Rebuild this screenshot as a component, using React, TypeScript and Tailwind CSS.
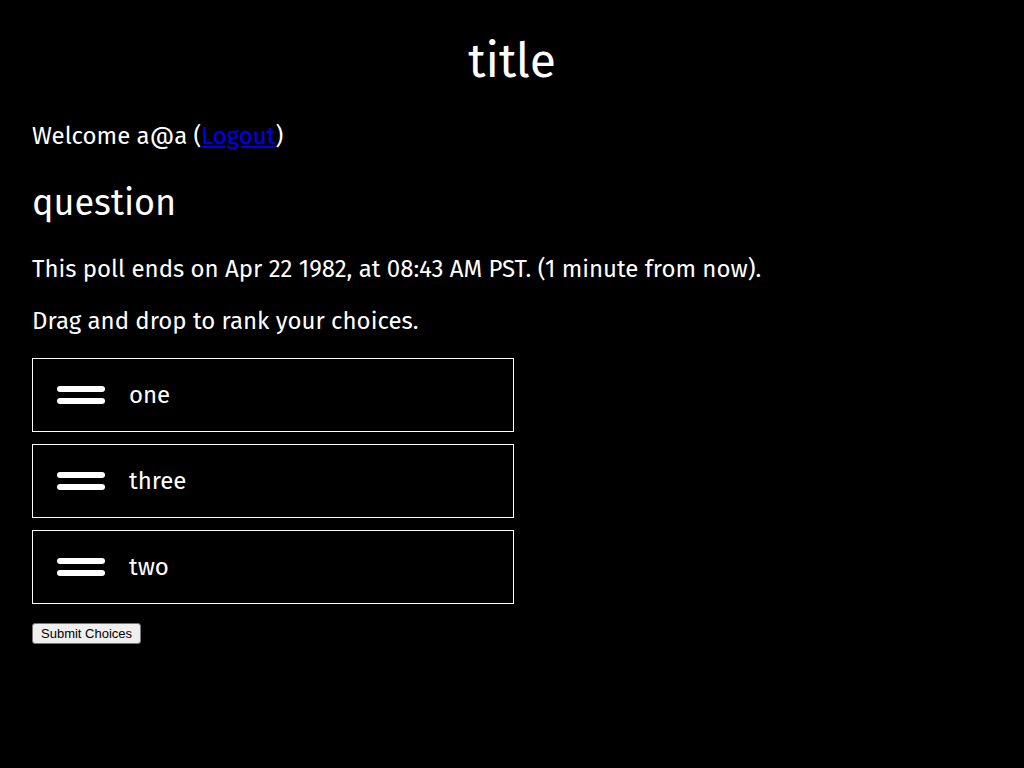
import React from "react";

const items = ["one", "three", "two"];

export default function App() {
  return (
    <div
      className="min-h-[768px] bg-black text-white px-8 pt-[1px]"
      style={{ fontFamily: '"Fira Sans", "Noto Sans", sans-serif' }}
    >
      <h1 className="text-center text-[48px] leading-[58px] font-normal mt-[31px] mb-[32px]">title</h1>
      <p className="text-[24px] leading-[29px] mb-[31px]">
        Welcome a@a (
        <a href="#" className="text-[#0000ee] underline">
          Logout
        </a>
        )
      </p>
      <h2 className="text-[36px] leading-[43px] font-normal mb-[30px]">question</h2>
      <p className="text-[24px] leading-[29px] mb-[23px]">
        This poll ends on Apr 22 1982, at 08:43 AM PST. (1 minute from now).
      </p>
      <p className="text-[24px] leading-[29px] mb-[22px]">Drag and drop to rank your choices.</p>
      <div className="flex flex-col gap-[12px] w-[482px]">
        {items.map((t) => (
          <div key={t} className="h-[74px] border border-white flex items-center pl-[24px]">
            <div className="flex flex-col gap-[6px] w-[48px]">
              <div className="h-[6px] rounded-full bg-white" />
              <div className="h-[6px] rounded-full bg-white" />
            </div>
            <span className="ml-[24px] text-[24px] leading-[29px]">{t}</span>
          </div>
        ))}
      </div>
      <button
        className="mt-[19px] h-[21px] px-[8px] text-[13px] leading-[15px] text-black bg-[#efefef] border border-[#767676] rounded-[3px]"
        style={{ fontFamily: '"Liberation Sans", Arial, sans-serif' }}
      >
        Submit Choices
      </button>
    </div>
  );
}
